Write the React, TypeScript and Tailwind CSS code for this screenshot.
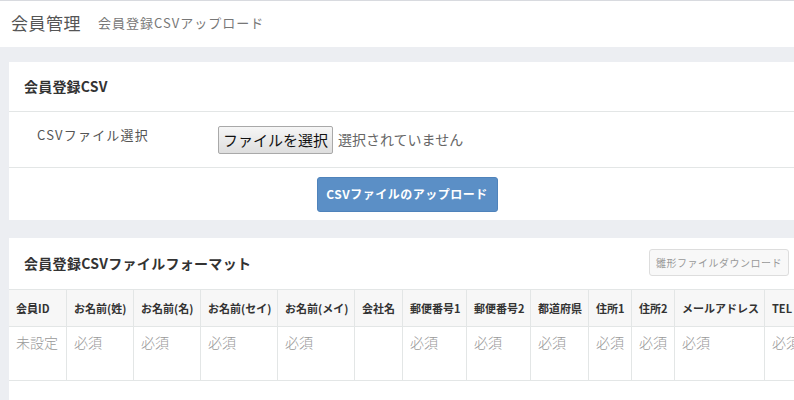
import React from "react";

const COLUMNS = [
  { label: "会員ID", w: 57, value: "未設定" },
  { label: "お名前(姓)", w: 67, value: "必須" },
  { label: "お名前(名)", w: 67, value: "必須" },
  { label: "お名前(セイ)", w: 77, value: "必須" },
  { label: "お名前(メイ)", w: 77, value: "必須" },
  { label: "会社名", w: 48, value: "" },
  { label: "郵便番号1", w: 64, value: "必須" },
  { label: "郵便番号2", w: 64, value: "必須" },
  { label: "都道府県", w: 58, value: "必須" },
  { label: "住所1", w: 43, value: "必須" },
  { label: "住所2", w: 43, value: "必須" },
  { label: "メールアドレス", w: 90, value: "必須" },
  { label: "TEL", w: 60, value: "必須" },
];

export default function App() {
  return (
    <div
      className="w-[794px] h-[400px] overflow-hidden bg-[#eceef2] text-[#333]"
      style={{ fontFamily: '"Noto Sans CJK JP", "Noto Sans", sans-serif' }}
    >
      {/* Page header */}
      <div className="h-[47px] bg-white border-t border-[#d8dadf] flex items-center pl-[11px] gap-[17px] pb-[3px]">
        <span className="text-[17px] text-[#555] tracking-[0.5px]">会員管理</span>
        <span className="text-[13px] text-[#777] tracking-[1px]">会員登録CSVアップロード</span>
      </div>

      <div className="pl-[9px] pt-[15px] flex flex-col gap-[18px]">
        {/* Upload card */}
        <div className="w-[796px] bg-white">
          <div className="h-[50px] flex items-center px-[15px] border-b border-[#e3e6e6]">
            <span className="text-[14px] font-bold text-[#333] tracking-[0.2px]">会員登録CSV</span>
          </div>
          <div className="h-[56px] flex items-center border-b border-[#e3e6e6]">
            <span className="pl-[28px] w-[209px] text-[13px] text-[#555] tracking-[1.2px] -mt-[10px]">CSVファイル選択</span>
            <button className="h-[28px] px-[4px] border border-[#a9a9a9] rounded-[2px] bg-gradient-to-b from-[#f6f6f6] to-[#dedede] text-[15px] text-[#111] leading-none">
              ファイルを選択
            </button>
            <span className="ml-[5px] text-[14px] text-[#666]">選択されていません</span>
          </div>
          <div className="h-[52px] flex items-center justify-center">
            <button className="w-[181px] h-[35px] rounded-[3px] bg-[#5b8fc6] border border-[#4f83bb] text-white text-[12px] font-bold tracking-[0.5px]">
              CSVファイルのアップロード
            </button>
          </div>
        </div>

        {/* Format card */}
        <div className="w-[796px] bg-white">
          <div className="h-[51px] flex items-center justify-between pl-[15px] pr-[16px]">
            <span className="text-[14px] font-bold text-[#333] tracking-[0.3px]">会員登録CSVファイルフォーマット</span>
            <button className="h-[27px] px-[6px] border border-[#ddd] rounded-[3px] bg-[#f8f8f8] text-[10px] text-[#999] tracking-[0.5px] -mt-[2px]">
              雛形ファイルダウンロード
            </button>
          </div>
          <div className="flex border-y border-[#e3e6e6]">
            {COLUMNS.map((c, i) => (
              <div
                key={c.label}
                className={`flex flex-col shrink-0 ${i > 0 ? "border-l border-[#e3e6e6]" : ""}`}
                style={{ width: c.w }}
              >
                <div className="h-[37px] bg-[#f7f7f7] border-b border-[#e3e6e6] flex items-center px-[7px] text-[11px] font-bold text-[#333] whitespace-nowrap">
                  {c.label}
                </div>
                <div className="h-[53px] px-[7px] pt-[5px] text-[14px] font-light text-[#999] whitespace-nowrap">
                  {c.value}
                </div>
              </div>
            ))}
          </div>
          <div className="h-[30px]" />
        </div>
      </div>
    </div>
  );
}
